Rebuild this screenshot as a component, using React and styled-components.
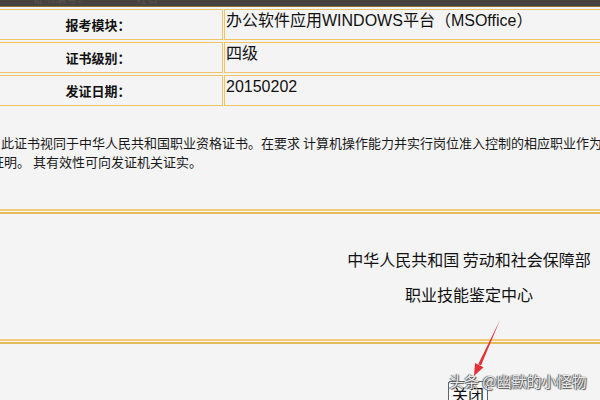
import React from "react";
import styled, { createGlobalStyle } from "styled-components";

const GlobalStyle = createGlobalStyle`
  html, body {
    margin: 0;
    padding: 0;
    background: #f4f4f4;
    overflow: hidden;
  }
  body {
    width: 600px;
    height: 400px;
    font-family: "Liberation Sans", "Noto Sans CJK SC", sans-serif;
    color: #111;
  }
`;

const gold = "#edc466";

// the certificate page is wider than the window and sits a little to the left
const Page = styled.div`
  position: relative;
  width: 680px;
  height: 400px;
  margin-left: -28px;
`;

const TopBar = styled.div`
  height: 7px;
  background: #454240;
  border-bottom: 1px solid #8c7030;
  box-sizing: border-box;
  overflow: hidden;
  display: flex;
  gap: 48px;
  padding-left: 61px;
`;

const TopBarText = styled.span`
  font-size: 11px;
  line-height: 11px;
  margin-top: -6px;
  color: #57534f;
  white-space: nowrap;
`;

const InfoTable = styled.table`
  border-collapse: separate;
  border-spacing: 1px 2px;
  width: 100%;
`;

const LabelCell = styled.th`
  width: 248px;
  height: 28px;
  padding: 0;
  border: 1px solid ${gold};
  font-family: "Noto Sans CJK SC", sans-serif;
  font-size: 13px;
  font-weight: 700;
  text-align: center;
  vertical-align: middle;
  color: #111;
`;

const ValueCell = styled.td`
  height: 28px;
  padding: 1px 0 0 1px;
  border: 1px solid ${gold};
  font-size: 16px;
  line-height: 20px;
  vertical-align: top;
  white-space: nowrap;
  color: #111;
`;

const Note = styled.p`
  margin: 25px 0 0;
  padding-left: 19px;
  text-indent: 10px;
  font-family: "Noto Sans CJK SC", sans-serif;
  font-size: 13px;
  line-height: 19px;
  white-space: nowrap;
  color: #1a1a1a;
`;

const Divider = styled.div`
  height: 1px;
  margin-top: ${(p) => p.$gap}px;
  border-top: 2px solid #f2cd75;
  border-bottom: 2px solid #e6bb5a;
`;

const Signature = styled.div`
  display: flex;
  flex-direction: column;
  align-items: center;
  gap: 15px;
  width: 244px;
  margin: 35px 0 0 375px;
`;

const SignLine = styled.div`
  font-family: "Noto Sans CJK SC", sans-serif;
  font-size: 16px;
  line-height: 20px;
  white-space: nowrap;
  color: #111;
`;

const Footer = styled.div`
  display: flex;
  padding: 37px 0 0 476px;
`;

const CloseButton = styled.button`
  font-family: "Noto Sans CJK SC", sans-serif;
  font-size: 16px;
  line-height: 20px;
  height: 26px;
  padding: 0 3px;
  color: #111;
  background: #fbfbfb;
  border: 1px solid #5c6470;
  border-radius: 2px;
`;

const Watermark = styled.div`
  position: absolute;
  left: 477px;
  top: 371px;
  font-family: "Noto Sans CJK SC", sans-serif;
  font-size: 15px;
  line-height: 20px;
  white-space: nowrap;
  color: rgba(255, 255, 255, 0.9);
  text-shadow: 0 0 1px #444, 1px 1px 1px #555, -1px 0 1px #666;
`;

const Arrow = styled.svg`
  position: absolute;
  left: 493px;
  top: 318px;
`;

const rows = [
  { label: "报考模块：", value: "办公软件应用WINDOWS平台（MSOffice）" },
  { label: "证书级别：", value: "四级" },
  { label: "发证日期：", value: "20150202" },
];

export default function App() {
  return (
    <>
      <GlobalStyle />
      <Page>
        <TopBar>
          <TopBarText>证书编号：</TopBarText>
          <TopBarText>姓名</TopBarText>
        </TopBar>
        <InfoTable>
          <tbody>
            {rows.map((r) => (
              <tr key={r.label}>
                <LabelCell>{r.label}</LabelCell>
                <ValueCell>{r.value}</ValueCell>
              </tr>
            ))}
          </tbody>
        </InfoTable>
        <Note>
          此证书视同于中华人民共和国职业资格证书。在要求 计算机操作能力并实行岗位准入控制的相应职业作为
          <br />
          证明。 其有效性可向发证机关证实。
        </Note>
        <Divider $gap={38} />
        <Signature>
          <SignLine>中华人民共和国 劳动和社会保障部</SignLine>
          <SignLine>职业技能鉴定中心</SignLine>
        </Signature>
        <Divider $gap={35} />
        <Footer>
          <CloseButton>关闭</CloseButton>
        </Footer>
        <Watermark>头条 @幽默的小怪物</Watermark>
        <Arrow width="45" height="65" viewBox="0 0 45 65">
          <path d="M35 2 L16 47.5 L13.2 46.2 Z" fill="#e5303a" />
          <path d="M9 58 L18.5 49.2 L10 45 Z" fill="#e5303a" />
        </Arrow>
      </Page>
    </>
  );
}
